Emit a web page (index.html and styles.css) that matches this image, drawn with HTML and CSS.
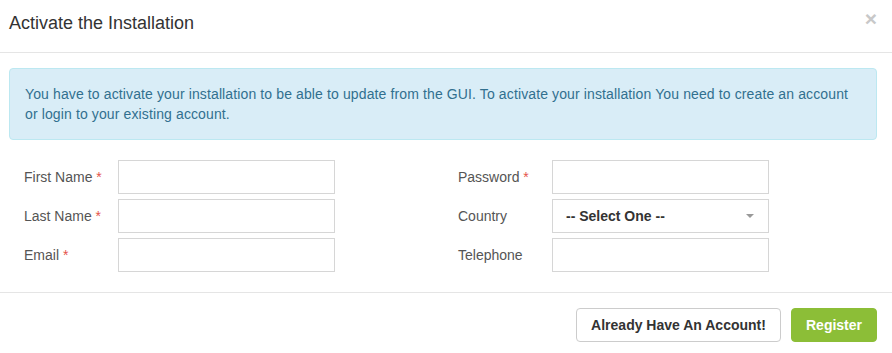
FILE: index.html
```html
<!DOCTYPE html>
<html lang="en">
<head>
  <meta charset="UTF-8" />
  <title>Activate the Installation</title>
  <link rel="stylesheet" href="styles.css">
</head>
<body>
<div class="modal">
  <div class="modal-header">
    <h4 class="modal-title">Activate the Installation</h4>
    <button class="close" type="button">&times;</button>
  </div>

  <div class="modal-body">
    <div class="alert">
      You have to activate your installation to be able to update from the GUI. To activate your installation You need to create an account or login to your existing account.
    </div>

    <form class="form" autocomplete="off">
      <div class="col">
        <div class="form-group">
          <label for="first">First Name <span class="req">*</span></label>
          <input id="first" type="text" class="form-control">
        </div>
        <div class="form-group">
          <label for="last">Last Name <span class="req">*</span></label>
          <input id="last" type="text" class="form-control">
        </div>
        <div class="form-group">
          <label for="email">Email <span class="req">*</span></label>
          <input id="email" type="email" class="form-control">
        </div>
      </div>

      <div class="col">
        <div class="form-group">
          <label for="pass">Password <span class="req">*</span></label>
          <input id="pass" type="password" class="form-control">
        </div>
        <div class="form-group">
          <label for="country">Country</label>
          <div class="select form-control" id="country">
            <span>-- Select One --</span>
            <i class="caret"></i>
          </div>
        </div>
        <div class="form-group">
          <label for="tel">Telephone</label>
          <input id="tel" type="text" class="form-control">
        </div>
      </div>
    </form>
  </div>

  <div class="modal-footer">
    <button class="btn btn-default" type="button">Already Have An Account!</button>
    <button class="btn btn-success" type="button">Register</button>
  </div>
</div>
</body>
</html>
```

FILE: styles.css
```css
:root { --text:#333; --label:#555; --border:#d6d6d6; --green:#8cbe37; }
*{box-sizing:border-box;margin:0;padding:0;font-family:"Liberation Sans",Arial,sans-serif}
html,body{height:100%}
body{background:#fff;color:var(--text);font-size:14px;line-height:20px;overflow:hidden}

.modal{width:892px;background:#fff}

.modal-header{
  display:flex;
  justify-content:space-between;
  align-items:flex-start;
  height:53px;
  padding:10px 15px 0 9px;
  border-bottom:1px solid #e5e5e5;
}
.modal-title{font-size:18px;font-weight:400;line-height:26px;color:var(--text)}
.close{
  background:none;border:0;
  font-size:21px;font-weight:700;line-height:16px;
  color:#c8c8c8;margin-top:1px;cursor:pointer;
}

.modal-body{padding:15px 15px 15px 9px}

.alert{
  background:#d9edf7;
  border:1px solid #bce8f1;
  border-radius:4px;
  color:#31708f;
  padding:15px;
  margin-bottom:20px;
  letter-spacing:.12px;
}

.form{display:grid;grid-template-columns:1fr 1fr}
.col{padding:0 15px}
.form-group{display:flex;align-items:center;margin-bottom:5px}
.form-group label{width:94px;color:var(--label)}
.req{color:#e5534b}

.form-control{
  width:217px;height:34px;
  border:1px solid var(--border);
  background:#fff;
  padding:6px 12px;
  font-size:14px;
  outline:none;
}
.select{display:flex;align-items:center;justify-content:space-between;padding:0 14px 0 13px;font-weight:700;color:var(--text)}
.caret{
  width:0;height:0;
  border-left:4px solid transparent;
  border-right:4px solid transparent;
  border-top:4px solid #999;
}

.modal-footer{
  display:flex;
  justify-content:flex-end;
  gap:10px;
  padding:15px 15px;
  border-top:1px solid #e5e5e5;
}
.btn{
  height:34px;
  padding:6px 12px;
  border-radius:4px;
  font-size:14px;
  font-weight:700;
  cursor:pointer;
}
.btn-default{width:205px;background:#fff;border:1px solid #ccc;color:var(--text)}
.btn-success{width:86px;background:var(--green);border:1px solid var(--green);color:#fff}
```
